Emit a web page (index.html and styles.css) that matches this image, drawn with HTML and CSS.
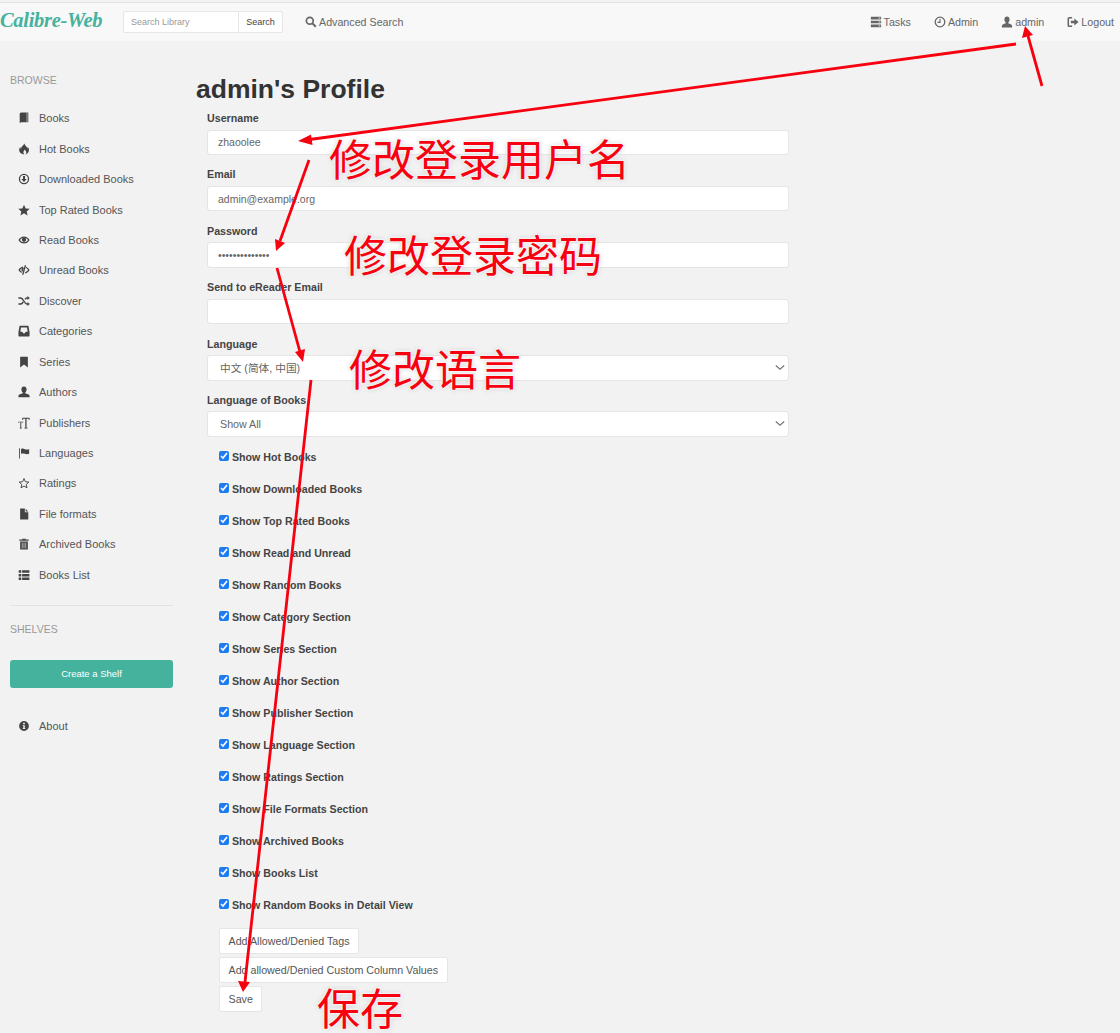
FILE: index.html
```html
<!DOCTYPE html>
<html lang="en">
<head>
  <meta charset="utf-8">
  <title>admin's Profile | Calibre-Web</title>
  <link rel="stylesheet" href="styles.css">
</head>
<body>
  <div class="navBar">
    <a class="brand" href="#">Calibre-Web</a>
    <form class="searchBox">
      <input class="searchInput" type="text" placeholder="Search Library">
      <button class="searchButton" type="button">Search</button>
    </form>
    <a class="navLink advLink" href="#">
      <svg class="navIcon" viewBox="0 0 14 14"><circle cx="5.6" cy="5.6" r="4" fill="none" stroke="currentColor" stroke-width="2"/><path d="M8.6 8.6l4 4" stroke="currentColor" stroke-width="2.4"/></svg>
      Advanced Search
    </a>
    <div class="navRight">
      <a class="navLink" href="#">
        <svg class="navIcon" viewBox="0 0 14 12"><path d="M1 0h12v3H1zM1 4.5h12v3H1zM1 9h12v3H1z" fill="currentColor"/><path d="M10 1.5h2M10 6h2M10 10.5h2" stroke="#f8f8f8" stroke-width="1"/></svg>
        Tasks
      </a>
      <a class="navLink" href="#">
        <svg class="navIcon" viewBox="0 0 14 14"><circle cx="7" cy="7" r="5.6" fill="none" stroke="currentColor" stroke-width="1.5"/><path d="M7 3.5V7.5H4" fill="none" stroke="currentColor" stroke-width="1.3"/></svg>
        Admin
      </a>
      <a class="navLink" href="#">
        <svg class="navIcon" viewBox="0 0 14 14"><path d="M7 .5c2 0 3 1.500 3 3.500 0 1.500-.7 2.700-1.500 3.400v1.200c1.800.7 4.500 1.200 4.500 3.100V13.500H1v-1.800c0-1.900 2.700-2.400 4.500-3.100V7.400C4.700 6.700 4 5.500 4 4 4 2 5 .5 7 .5z" fill="currentColor"/></svg>
        admin
      </a>
      <a class="navLink" href="#">
        <svg class="navIcon" viewBox="0 0 14 14"><path d="M6 2H2.500A1 1 0 0 0 1.500 3v8a1 1 0 0 0 1 1H6" fill="none" stroke="currentColor" stroke-width="1.800"/><path d="M4.500 5.500H8.500V2.800L13.500 7 8.500 11.200V8.500H4.500z" fill="currentColor"/></svg>
        Logout
      </a>
    </div>
  </div>

  <div class="page">
    <div class="sidebar">
      <div class="sideTitle">BROWSE</div>
      <ul class="sideList">
        <li><svg viewBox="0 0 14 14"><path d="M2 1.500 3.500.5H12v11.500H3.500L2 13z" fill="currentColor"/><path d="M10.500.5V12" stroke="#f2f2f2" stroke-width=".7"/></svg>Books</li>
        <li><svg viewBox="0 0 14 14"><path d="M7.500.5c.5 2.500 3 3.500 3.500 6 .3-.6.300-1.300.2-2 1.500 1.500 2 3.500 1.300 5.500-.5 1.600-2 3-3.800 3.500 1-1 1.300-2.300.7-3.500-.4-.9-1.200-1.500-1.400-2.500-.9 1-1.900 2.200-1.700 3.500.1 1 .6 2 1.200 2.500C4 13 2 11.500 1.500 9.300c-.4-1.800.3-3.300 1.200-4.500 0 .8.200 1.500.8 2C3.500 4.500 6 3 7.500.5z" fill="currentColor"/></svg>Hot Books</li>
        <li><svg viewBox="0 0 14 14"><circle cx="7" cy="7" r="5.300" fill="none" stroke="currentColor" stroke-width="1.500"/><path d="M5.800 3.500h2.400v3.500h2L7 10.500 3.800 7h2z" fill="currentColor"/></svg>Downloaded Books</li>
        <li><svg viewBox="0 0 14 14"><path d="M7 .8l1.900 4.400 4.800.4-3.600 3.100 1.100 4.700L7 10.900l-4.200 2.500 1.100-4.700L.3 5.600l4.800-.4z" fill="currentColor"/></svg>Top Rated Books</li>
        <li><svg viewBox="0 0 14 14"><path d="M.5 7C2 4.200 4.300 2.800 7 2.800s5 1.400 6.500 4.200C12 9.800 9.700 11.200 7 11.200S2 9.800.5 7z" fill="currentColor"/><path d="M2.300 7C3.500 5.300 5 4.400 7 4.400s3.500.9 4.700 2.600C10.500 8.700 9 9.600 7 9.600S3.500 8.700 2.300 7z" fill="#f2f2f2"/><circle cx="7" cy="6.700" r="2.500" fill="currentColor"/></svg>Read Books</li>
        <li><svg viewBox="0 0 14 14"><path d="M.5 7C1.500 5 3.500 3.300 6 2.900L5.700 4.600C4.200 5 3 5.900 2.300 7c.5.800 1.300 1.500 2.200 2L4 10.500C2.500 9.700 1.300 8.500.5 7zM9 3.300c1.900.6 3.500 2 4.500 3.700-1 2-3 3.700-5.500 4.100l.3-1.600c1.500-.4 2.700-1.300 3.400-2.500-.6-.9-1.400-1.700-2.400-2.200z" fill="currentColor"/><path d="M8.700 1.500 5.500 12.500" stroke="currentColor" stroke-width="1.500"/><path d="M4 6.700c0-1.300 1-2.400 3-2.500L5.400 9C4.500 8.500 4 7.700 4 6.700z" fill="currentColor"/></svg>Unread Books</li>
        <li><svg viewBox="0 0 14 14"><path d="M.5 3.500h2.800c2.800 0 4.200 7 7 7H11.500M.5 10.500h2.800c1.200 0 2.100-1.200 2.800-2.500M8.200 5c.6-.9 1.300-1.500 2.100-1.500H11.500" fill="none" stroke="currentColor" stroke-width="1.700"/><path d="M11 1.300 13.800 3.500 11 5.700zM11 8.300l2.800 2.200L11 12.700z" fill="currentColor"/></svg>Discover</li>
        <li><svg viewBox="0 0 14 14"><path fill-rule="evenodd" d="M3 1h8c.8 0 1.500.6 1.500 1.500l1 6V12.500c0 .6-.4 1-1 1h-11c-.6 0-1-.4-1-1V8.500l1-6C1.500 1.600 2.200 1 3 1zM3.500 2.800 2.700 8H5l1 1.500h2L9 8h2.300l-.8-5.200z" fill="currentColor"/></svg>Categories</li>
        <li><svg viewBox="0 0 14 14"><path d="M2.500.8h9V13.500L7 9.800 2.500 13.500z" fill="currentColor"/></svg>Series</li>
        <li><svg viewBox="0 0 14 14"><path d="M7 .5c2 0 3 1.500 3 3.500 0 1.500-.7 2.700-1.500 3.400v1.200c1.800.7 5 1.200 5 3.100V13H.5v-1.300c0-1.900 3.200-2.400 5-3.100V7.400C4.700 6.700 4 5.500 4 4 4 2 5 .5 7 .5z" fill="currentColor"/></svg>Authors</li>
        <li><svg viewBox="0 0 14 14"><path d="M5 1h8.500v2.500h-.8L12.300 2H10v10.500h1.200v.8H7.300v-.8H8.500V2H6.200L5.800 3.500H5zM.5 5.500h5.500v1.500h-.5L5.300 6.200H3.800v6.300h.7v.8H2v-.8h.7V6.200H1.200L1 7H.5z" fill="currentColor"/></svg>Publishers</li>
        <li><svg viewBox="0 0 14 14"><path d="M1.200 1.500h1V13.500h-1z" fill="currentColor"/><path d="M3.500 2.500c1.500-1 3-.6 4.500 0s3 .6 5 0V8c-2 .8-3.500.6-5 0s-3-.7-4.500 0z" fill="currentColor"/></svg>Languages</li>
        <li><svg viewBox="0 0 14 14"><path d="M7 1.800l1.600 3.800 4.100.3-3.100 2.700.9 4L7 10.600l-3.500 2 .9-4L1.300 5.900l4.100-.3z" fill="none" stroke="currentColor" stroke-width="1.100"/></svg>Ratings</li>
        <li><svg viewBox="0 0 14 14"><path d="M2.500.5h5.500v4.500h4V13.500h-9.500zM9 .8 11.800 4H9z" fill="currentColor"/></svg>File formats</li>
        <li><svg viewBox="0 0 14 14"><path d="M5 1.800V.8h4v1h3.500v1.400h-11V1.800zM2.500 4.200h9V13.500h-9z" fill="currentColor"/><path d="M5 5.500v6.500M7 5.500v6.500M9 5.500v6.500" stroke="#f2f2f2" stroke-width=".7"/></svg>Archived Books</li>
        <li><svg viewBox="0 0 14 14"><path d="M.8 1.500h3v3h-3zM.8 5.700h3v3h-3zM.8 9.900h3v3h-3zM4.800 1.500h8.500v3H4.800zM4.800 5.700h8.500v3H4.800zM4.800 9.900h8.500v3H4.800z" fill="currentColor"/></svg>Books List</li>
      </ul>
      <hr class="sideLine">
      <div class="sideTitle shelves">SHELVES</div>
      <a class="shelfButton" href="#">Create a Shelf</a>
      <ul class="sideList about">
        <li><svg viewBox="0 0 14 14"><path fill-rule="evenodd" d="M7 1.300a5.700 5.700 0 1 1 0 11.400A5.700 5.700 0 0 1 7 1.300zM6 3.300v1.800h2V3.300zM5.500 6v1h.7v2.500h-.7v1h3v-1h-.6V6z" fill="currentColor"/></svg>About</li>
      </ul>
    </div>

    <div class="main">
      <h1 class="pageTitle">admin's Profile</h1>
      <form class="profileForm">
        <div class="field">
          <label>Username</label>
          <input type="text" value="zhaoolee">
        </div>
        <div class="field">
          <label>Email</label>
          <input type="text" value="admin@example.org">
        </div>
        <div class="field">
          <label>Password</label>
          <input type="password" value="abcdefghijklmn">
        </div>
        <div class="field">
          <label>Send to eReader Email</label>
          <input type="text">
        </div>
        <div class="field">
          <label>Language</label>
          <div class="selectWrap">
            <select><option>中文 (简体, 中国)</option></select>
            <svg class="chevron" viewBox="0 0 12 7"><path d="M1 1l5 4.500L11 1" fill="none" stroke="currentColor" stroke-width="1.500"/></svg>
          </div>
        </div>
        <div class="field">
          <label>Language of Books</label>
          <div class="selectWrap">
            <select><option>Show All</option></select>
            <svg class="chevron" viewBox="0 0 12 7"><path d="M1 1l5 4.500L11 1" fill="none" stroke="currentColor" stroke-width="1.500"/></svg>
          </div>
        </div>
        <div class="checks">
          <label class="check"><input type="checkbox" checked>Show Hot Books</label>
          <label class="check"><input type="checkbox" checked>Show Downloaded Books</label>
          <label class="check"><input type="checkbox" checked>Show Top Rated Books</label>
          <label class="check"><input type="checkbox" checked>Show Read and Unread</label>
          <label class="check"><input type="checkbox" checked>Show Random Books</label>
          <label class="check"><input type="checkbox" checked>Show Category Section</label>
          <label class="check"><input type="checkbox" checked>Show Series Section</label>
          <label class="check"><input type="checkbox" checked>Show Author Section</label>
          <label class="check"><input type="checkbox" checked>Show Publisher Section</label>
          <label class="check"><input type="checkbox" checked>Show Language Section</label>
          <label class="check"><input type="checkbox" checked>Show Ratings Section</label>
          <label class="check"><input type="checkbox" checked>Show File Formats Section</label>
          <label class="check"><input type="checkbox" checked>Show Archived Books</label>
          <label class="check"><input type="checkbox" checked>Show Books List</label>
          <label class="check"><input type="checkbox" checked>Show Random Books in Detail View</label>
        </div>
        <div class="buttons">
          <a class="btn" href="#">Add Allowed/Denied Tags</a>
          <a class="btn" href="#">Add allowed/Denied Custom Column Values</a>
          <button class="btn" type="button">Save</button>
        </div>
      </form>
    </div>
  </div>

  <!-- red notes drawn on top of the screenshot -->
  <svg class="arrows" viewBox="0 0 1120 1033">
    <g stroke="#f7000f" stroke-width="2.800" fill="#f7000f">
      <path d="M1016 44 306 140"/>
      <path d="M298 141 311 134.500 312.500 145z" stroke="none"/>
      <path d="M1042 86 1028 36"/>
      <path d="M1025 26 1022 38 1033 35z" stroke="none"/>
      <path d="M309 160 280 241"/>
      <path d="M276 251 275 239 285 243z" stroke="none"/>
      <path d="M277 268 300 352"/>
      <path d="M303 362 295 352 305 349z" stroke="none"/>
      <path d="M311 380 245 982"/>
      <path d="M243 992 238 981 250 982z" stroke="none"/>
    </g>
  </svg>
  <div class="note noteUser">修改登录用户名</div>
  <div class="note notePass">修改登录密码</div>
  <div class="note noteLang">修改语言</div>
  <div class="note noteSave">保存</div>
</body>
</html>
```

FILE: styles.css
```css
html, body {
  margin: 0;
  padding: 0;
}
body {
  position: relative;
  height: 1033px;
  overflow: hidden;
  background-color: #f2f2f2;
  font-family: "Liberation Sans", Arial, "Noto Sans CJK SC", sans-serif;
  font-size: 11px;
  color: #444;
}
a {
  color: inherit;
  text-decoration: none;
}

/* top bar */
.navBar {
  display: flex;
  align-items: center;
  height: 38px;
  margin-top: 2px;
  border-top: 1px solid #e2e2e2;
  background-color: #f8f8f8;
  color: #666;
}
.brand {
  width: 123px;
  margin-top: -3px;
  font-family: "Liberation Serif", serif;
  font-style: italic;
  font-weight: bold;
  font-size: 20.500px;
  letter-spacing: -.3px;
  color: #45b29d;
}
.searchBox {
  display: flex;
  height: 22px;
  margin-top: -1px;
}
.searchInput {
  box-sizing: border-box;
  width: 115px;
  padding: 0 7px;
  border: 1px solid #e6e6e6;
  border-right: 0;
  border-radius: 2px 0 0 2px;
  background-color: #fff;
  font: 9px "Liberation Sans", Arial, sans-serif;
}
.searchInput::placeholder {
  color: #999;
}
.searchButton {
  width: 45px;
  padding: 0;
  border: 1px solid #e6e6e6;
  border-radius: 0 2px 2px 0;
  background-color: #fff;
  font: 9px "Liberation Sans", Arial, sans-serif;
  color: #444;
}
.navLink {
  display: flex;
  align-items: center;
  gap: 2px;
  font-size: 10.700px;
  color: #666;
}
.advLink {
  margin-left: 22px;
}
.navIcon {
  width: 12px;
  height: 12px;
}
.navRight {
  display: flex;
  gap: 23px;
  margin-left: auto;
  padding-right: 6px;
}

/* left column */
.page {
  display: flex;
}
.sidebar {
  box-sizing: border-box;
  width: 173px;
  padding: 33px 0 0 10px;
  color: #555;
}
.sideTitle {
  font-size: 10.500px;
  line-height: 13px;
  color: #999;
}
.sideList {
  margin: 0;
  padding: 0;
  list-style: none;
}
.sidebar > .sideList:first-of-type {
  margin-top: 16px;
}
.sideList li {
  display: flex;
  align-items: center;
  gap: 9px;
  height: 30.450px;
  padding-left: 8px;
  white-space: nowrap;
}
.sideList svg {
  flex: none;
  width: 12px;
  height: 12px;
  color: #444;
}
.sideLine {
  height: 0;
  margin: 15px 0 0;
  border: 0;
  border-top: 1px solid #e3e3e3;
}
.shelves {
  margin-top: 17px;
}
.shelfButton {
  display: block;
  height: 28px;
  margin-top: 24px;
  border-radius: 3px;
  background-color: #45b29d;
  font-size: 9.500px;
  line-height: 28px;
  text-align: center;
  color: #fff;
}
.about {
  margin-top: 23px;
}

/* profile form */
.main {
  flex: 1;
  padding-left: 23px;
}
.pageTitle {
  margin: 32px 0 0;
  font-size: 26.500px;
  line-height: 32px;
  font-weight: bold;
  color: #333;
}
.profileForm {
  width: 582px;
  margin-left: 11px;
  margin-top: 6px;
}
.field {
  margin-bottom: 12.400px;
}
.field label {
  display: block;
  margin-bottom: 3.500px;
  font-size: 10.700px;
  font-weight: bold;
  line-height: 15px;
  color: #444;
}
.field input,
.field select {
  display: block;
  box-sizing: border-box;
  width: 100%;
  height: 25.500px;
  padding: 0 10px;
  border: 1px solid #e5e5e5;
  border-radius: 3px;
  background-color: #fff;
  font: 10.500px "Liberation Sans", Arial, "Noto Sans CJK SC", sans-serif;
  color: #666;
  appearance: none;
}
.field select {
  padding-left: 12px;
  font-size: 10.700px;
}
.selectWrap {
  position: relative;
}
.chevron {
  position: absolute;
  top: 9px;
  right: 4px;
  width: 10px;
  height: 7px;
  color: #777;
}
.checks {
  margin-top: -8px;
  padding-left: 12px;
}
.check {
  display: flex;
  align-items: center;
  gap: 3px;
  height: 32px;
  font-size: 10.650px;
  font-weight: bold;
  color: #444;
}
.check input {
  width: 10px;
  height: 10px;
  margin: -3px 0 0;
  accent-color: #1f7cf0;
}
.buttons {
  display: flex;
  flex-direction: column;
  align-items: flex-start;
  gap: 3px;
  margin-top: 7px;
  padding-left: 12px;
}
.btn {
  display: block;
  box-sizing: border-box;
  height: 26px;
  padding: 0 8.500px;
  border: 1px solid #e6e6e6;
  border-radius: 2px;
  background-color: #fff;
  font: 10.700px/24px "Liberation Sans", Arial, sans-serif;
  color: #555;
}

/* annotations over the screenshot */
.arrows {
  position: absolute;
  top: 0;
  left: 0;
  width: 1120px;
  height: 1033px;
}
.note {
  position: absolute;
  font-family: "Noto Sans CJK SC", sans-serif;
  font-size: 43px;
  line-height: 44px;
  white-space: nowrap;
  color: #f7000f;
  text-shadow: 0 0 3px #fff, 0 0 3px #fff, 0 0 5px #bbb;
}
.noteUser {
  top: 135px;
  left: 329px;
}
.notePass {
  top: 231px;
  left: 344px;
}
.noteLang {
  top: 345px;
  left: 349px;
}
.noteSave {
  top: 984px;
  left: 317px;
}
```
